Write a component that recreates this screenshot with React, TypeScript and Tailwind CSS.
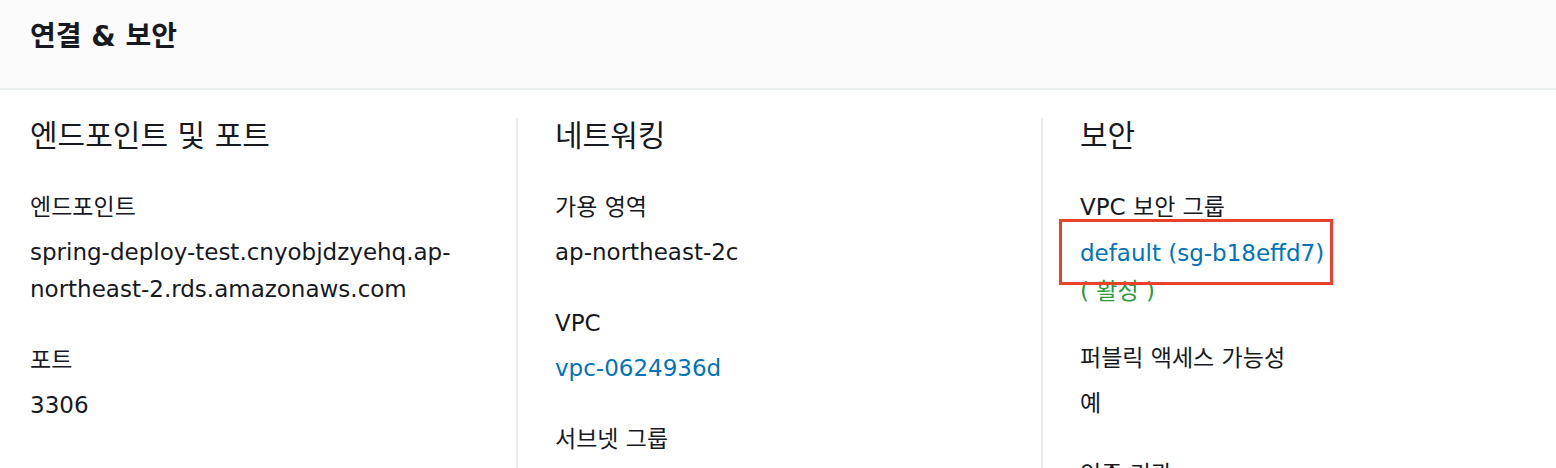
import React from "react";

const FONT = { fontFamily: '"DejaVu Sans", "Noto Sans CJK KR", sans-serif' };

function Label({ children }: { children: React.ReactNode }) {
  return <div className="text-[23px] leading-[37px] text-[#16191f]">{children}</div>;
}

function Value({ children, className = "" }: { children: React.ReactNode; className?: string }) {
  return <div className={"mt-[8px] text-[23px] leading-[37px] text-[#16191f] " + className}>{children}</div>;
}

function Heading({ children }: { children: React.ReactNode }) {
  return <h3 className="text-[30px] leading-[36px] font-normal text-[#16191f]">{children}</h3>;
}

export default function App() {
  return (
    <div className="w-[1556px] h-[468px] overflow-hidden bg-white" style={FONT}>
      <div className="h-[90px] bg-[#fafafa] border-b-2 border-[#eaeded] pl-[30px] pt-[19px]">
        <h2 className="text-[28px] leading-[36px] font-bold text-[#16191f]">연결 &amp; 보안</h2>
      </div>
      <div className="grid grid-cols-[486px_525px_1fr] pl-[30px] pt-[28px] h-[378px]">
        <div className="pr-[20px]">
          <Heading>엔드포인트 및 포트</Heading>
          <div className="mt-[35px]">
            <Label>엔드포인트</Label>
            <Value>spring-deploy-test.cnyobjdzyehq.ap-northeast-2.rds.amazonaws.com</Value>
          </div>
          <div className="mt-[34px]">
            <Label>포트</Label>
            <Value>3306</Value>
          </div>
        </div>
        <div className="border-l-2 border-[#eaeded] pl-[37px]">
          <Heading>네트워킹</Heading>
          <div className="mt-[35px]">
            <Label>가용 영역</Label>
            <Value>ap-northeast-2c</Value>
          </div>
          <div className="mt-[34px]">
            <Label>VPC</Label>
            <Value className="!text-[#0073bb]">vpc-0624936d</Value>
          </div>
          <div className="mt-[34px]">
            <Label>서브넷 그룹</Label>
            <Value>default</Value>
          </div>
        </div>
        <div className="border-l-2 border-[#eaeded] pl-[37px]">
          <Heading>보안</Heading>
          <div className="mt-[35px]">
            <Label>VPC 보안 그룹</Label>
            <div className="relative mt-[8px] text-[23px] leading-[38px]">
              <div className="text-[#0073bb]">default (sg-b18effd7)</div>
              <div className="text-[#2e9a3a]">( 활성 )</div>
              <div className="absolute left-[-21px] top-[-15px] w-[274px] h-[66px] border-[3px] border-[#e8412c]" />
            </div>
          </div>
          <div className="mt-[30px]">
            <Label>퍼블릭 액세스 가능성</Label>
            <Value>예</Value>
          </div>
          <div className="mt-[34px]">
            <Label>인증 기관</Label>
            <Value>rds-ca-2019</Value>
          </div>
        </div>
      </div>
    </div>
  );
}
